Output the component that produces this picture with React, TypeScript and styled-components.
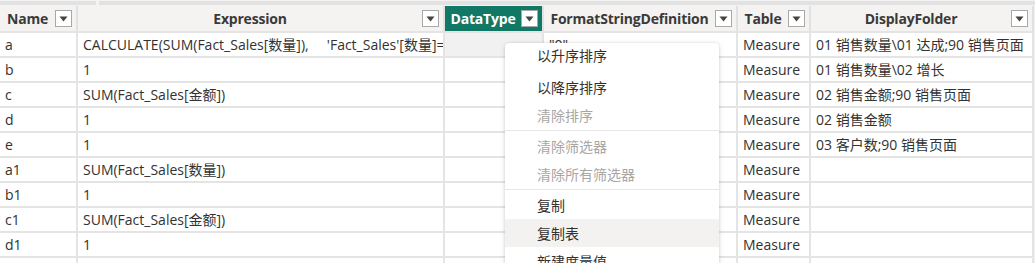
import React from "react";
import styled, { createGlobalStyle } from "styled-components";

const Global = createGlobalStyle`
  html, body { margin: 0; padding: 0; background: #ffffff; }
  body { font-family: "Open Sans", "Noto Sans CJK SC", sans-serif; }
  * { box-sizing: border-box; }
`;

const COLS = "76px 365px 97px 192px 71px 221px";

const Page = styled.div`
  position: relative;
  width: 1035px;
  height: 263px;
  overflow: hidden;
  background: #f0f0f0;
`;

const TopStrip = styled.div`
  height: 6px;
  display: flex;
  gap: 3px;
  padding-top: 1px;
  background: #f3f3f3;
`;

const StripBar = styled.div<{ $w: string }>`
  width: ${(p) => p.$w};
  height: 4px;
  background: #e2e2e2;
`;

const Grid = styled.div`
  display: grid;
  grid-template-columns: ${COLS};
  grid-auto-rows: 23px;
  column-gap: 2px;
  row-gap: 2px;
  background: #e4e4e4;
  padding-right: 2px;
  width: 1034px;
`;

const HeaderRow = styled.div`
  display: grid;
  grid-template-columns: ${COLS};
  column-gap: 2px;
  background: #e1e1e1;
  padding-right: 2px;
  width: 1034px;
  border-bottom: 2px solid #e4e4e4;
  height: 27px;
`;

const HeaderCell = styled.div<{ $active?: boolean }>`
  display: flex;
  align-items: center;
  padding: 0 4px 0 2px;
  background: ${(p) => (p.$active ? "#117865" : "#f4f3f2")};
  color: ${(p) => (p.$active ? "#ffffff" : "#3b3a39")};
  font-weight: 700;
  font-size: 14px;
  overflow: hidden;
`;

const HeaderLabel = styled.span`
  flex: 1;
  text-align: center;
  white-space: nowrap;
  overflow: hidden;
  letter-spacing: -0.2px;
`;

const FilterBtn = styled.span`
  flex: none;
  width: 17px;
  height: 17px;
  border: 1px solid #a8a8a8;
  background: #ffffff;
  display: flex;
  align-items: center;
  justify-content: center;
  margin-left: 2px;
`;

const Cell = styled.div<{ $shade?: boolean }>`
  background: ${(p) => (p.$shade ? "#f1f1f1" : "#ffffff")};
  color: #333231;
  font-size: 14px;
  line-height: 23px;
  padding-left: 5px;
  white-space: pre;
  overflow: hidden;
`;

const Menu = styled.div`
  position: absolute;
  left: 505px;
  top: 43px;
  width: 214px;
  height: 240px;
  background: #ffffff;
  border-radius: 4px;
  box-shadow: 0 0 3px rgba(0, 0, 0, 0.14), 0 2px 6px rgba(0, 0, 0, 0.1);
  display: flex;
  flex-direction: column;
`;

const MenuItem = styled.div<{ $disabled?: boolean; $hover?: boolean; $first?: boolean }>`
  height: ${(p) => (p.$first ? "30px" : "28px")};
  padding-bottom: ${(p) => (p.$first ? "6px" : "0")};
  flex: none;
  display: flex;
  align-items: center;
  padding-left: 32px;
  font-size: 14px;
  color: ${(p) => (p.$disabled ? "#a8a6a4" : "#323130")};
  background: ${(p) => (p.$hover ? "#f3f2f1" : "transparent")};
`;

const MenuSep = styled.div`
  height: 1px;
  margin: 1px 0;
  flex: none;
  background: #e8e6e4;
`;

const Arrow = () => (
  <svg width="9" height="6" viewBox="0 0 9 6">
    <path d="M0.5 0.5 H8.5 L4.5 5.5 Z" fill="#444" />
  </svg>
);

const headers = [
  { label: "Name" },
  { label: "Expression" },
  { label: "DataType", active: true },
  { label: "FormatStringDefinition" },
  { label: "Table" },
  { label: "DisplayFolder" },
];

const rows: string[][] = [
  ["a", "CALCULATE(SUM(Fact_Sales[数量]),     'Fact_Sales'[数量]=1", "", "\"0\"", "Measure", "01 销售数量\\01 达成;90 销售页面"],
  ["b", "1", "", "", "Measure", "01 销售数量\\02 增长"],
  ["c", "SUM(Fact_Sales[金额])", "", "", "Measure", "02 销售金额;90 销售页面"],
  ["d", "1", "", "", "Measure", "02 销售金额"],
  ["e", "1", "", "", "Measure", "03 客户数;90 销售页面"],
  ["a1", "SUM(Fact_Sales[数量])", "", "", "Measure", ""],
  ["b1", "1", "", "", "Measure", ""],
  ["c1", "SUM(Fact_Sales[金额])", "", "", "Measure", ""],
  ["d1", "1", "", "", "Measure", ""],
  ["", "", "", "", "", ""],
];

const menu = [
  { t: "以升序排序" },
  { t: "以降序排序" },
  { t: "清除排序", d: true },
  { sep: true },
  { t: "清除筛选器", d: true },
  { t: "清除所有筛选器", d: true },
  { sep: true },
  { t: "复制" },
  { t: "复制表", h: true },
  { t: "新建度量值" },
];

export default function App() {
  return (
    <Page>
      <Global />
      <TopStrip>
        <StripBar $w="96px" />
        <StripBar $w="936px" />
      </TopStrip>
      <HeaderRow>
        {headers.map((h) => (
          <HeaderCell key={h.label} $active={h.active}>
            <HeaderLabel>{h.label}</HeaderLabel>
            <FilterBtn>
              <Arrow />
            </FilterBtn>
          </HeaderCell>
        ))}
      </HeaderRow>
      <Grid>
        {rows.map((r, i) =>
          r.map((c, j) => (
            <Cell key={`${i}-${j}`} $shade={i === 0 && j === 2}>
              {c}
            </Cell>
          ))
        )}
      </Grid>
      <Menu>
        {menu.map((m, i) =>
          m.sep ? (
            <MenuSep key={i} />
          ) : (
            <MenuItem key={i} $disabled={m.d} $hover={m.h} $first={i === 0}>
              {m.t}
            </MenuItem>
          )
        )}
      </Menu>
    </Page>
  );
}
